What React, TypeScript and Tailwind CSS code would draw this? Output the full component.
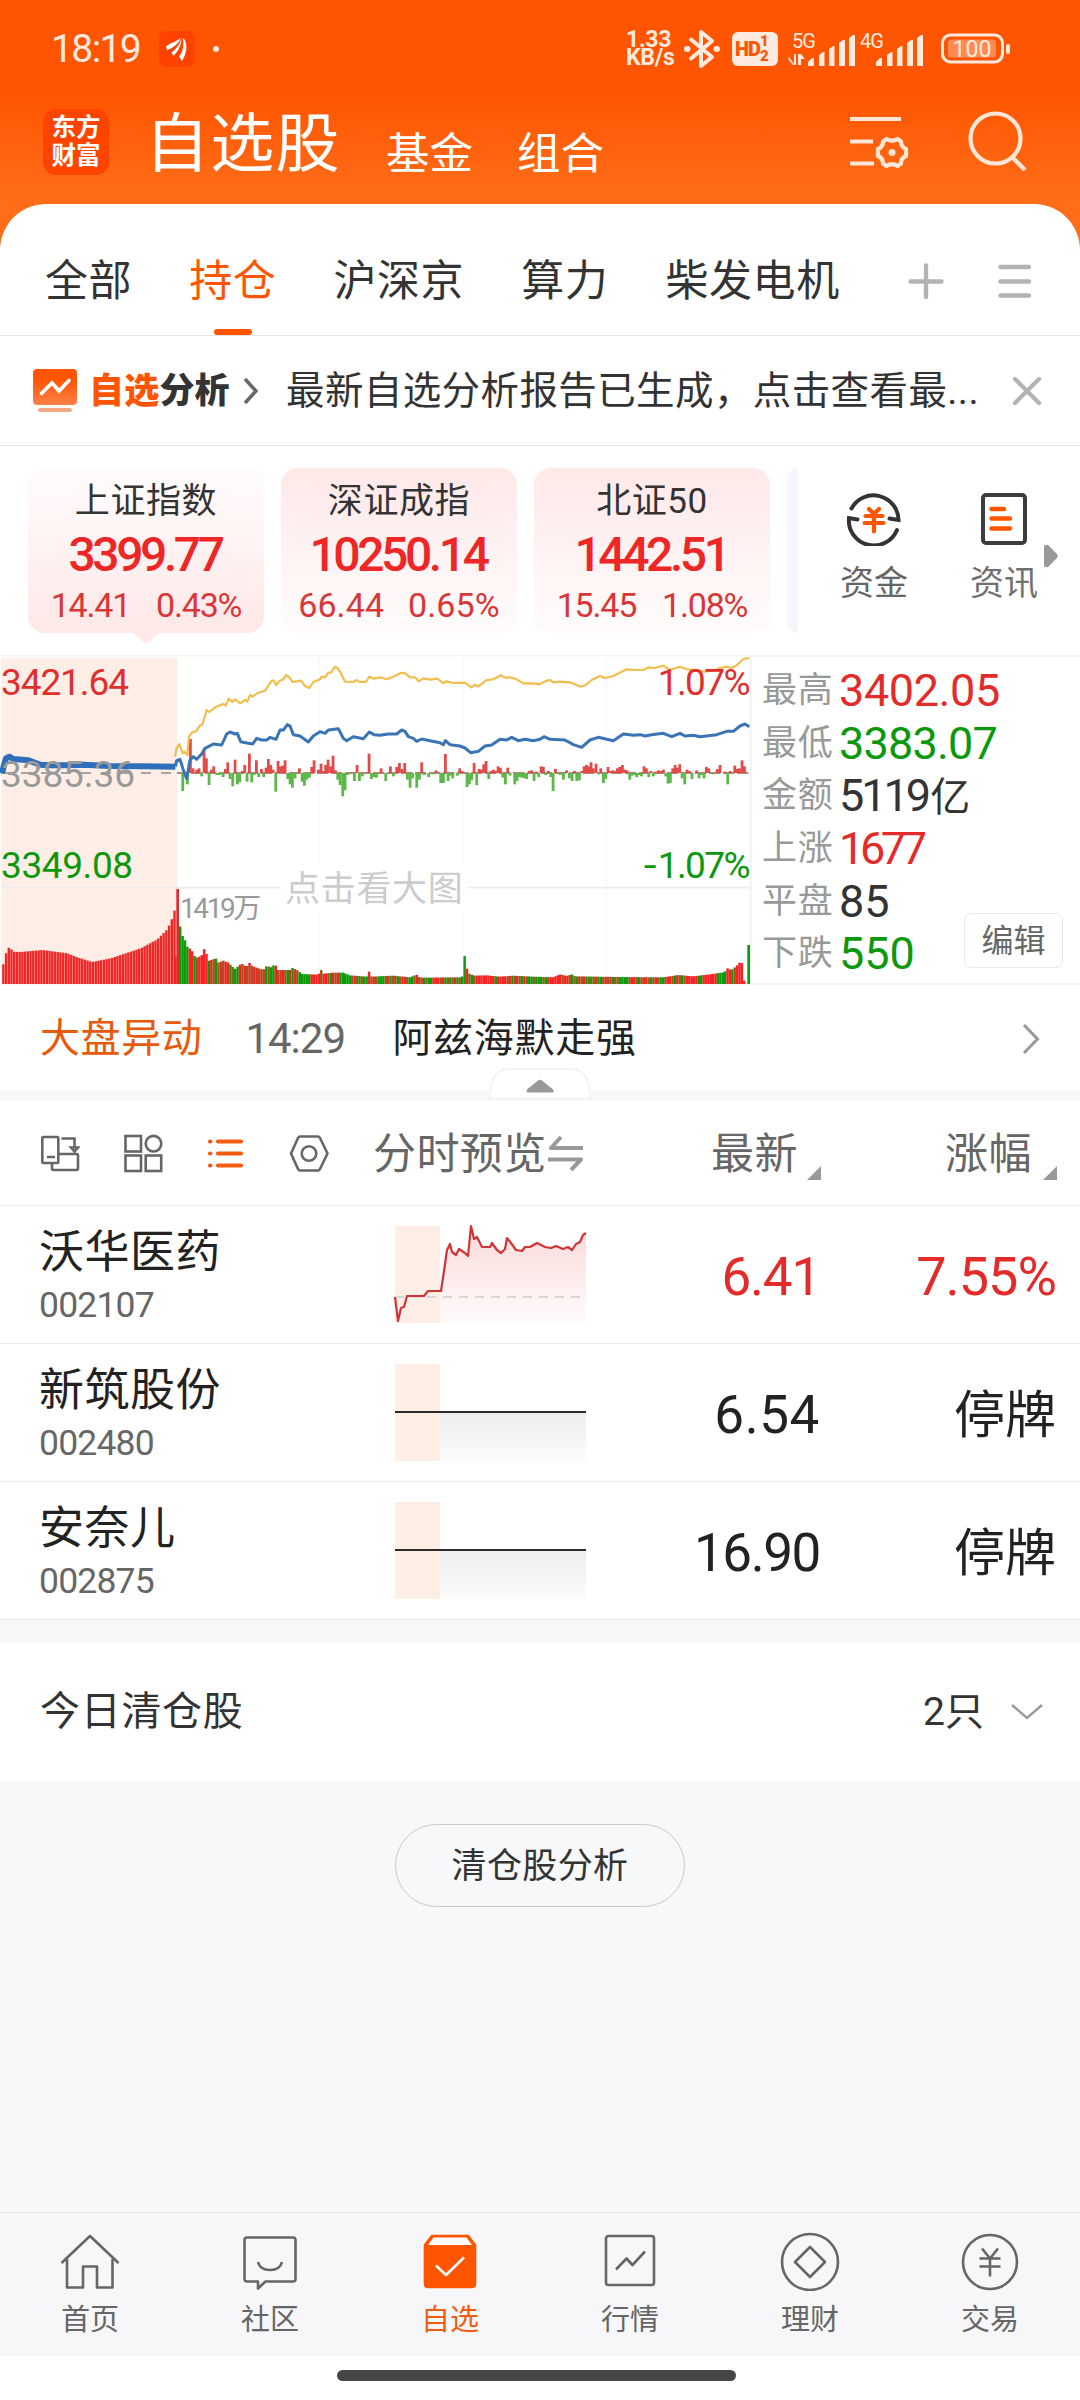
import type { ReactNode } from "react";

interface IndexCardData {
  name: string;
  value: string;
  change: string;
  percent: string;
  active?: boolean;
  wide?: boolean;
}

interface Stock {
  name: string;
  code: string;
  price: string;
  change: string;
  up: boolean;
  priceTracking: string;
}

const tabs = ["全部", "持仓", "沪深京", "算力", "柴发电机"];

const indexes: IndexCardData[] = [
  { name: "上证指数", value: "3399.77", change: "14.41", percent: "0.43%", active: true },
  { name: "深证成指", value: "10250.14", change: "66.44", percent: "0.65%", wide: true },
  { name: "北证50", value: "1442.51", change: "15.45", percent: "1.08%" },
];

const stats = [
  { label: "最高", value: "3402.05", color: "text-[#e52a2a]", tracking: "tracking-[-0.4px]" },
  { label: "最低", value: "3383.07", color: "text-[#0c980c]", tracking: "tracking-[-0.8px]" },
  { label: "金额", value: "5119亿", color: "text-[#333]", tracking: "tracking-[-3px]" },
  { label: "上涨", value: "1677", color: "text-[#e52a2a]", tracking: "tracking-[-4.4px]" },
  { label: "平盘", value: "85", color: "text-[#333]", tracking: "tracking-[0px]" },
  { label: "下跌", value: "550", color: "text-[#0c980c]", tracking: "tracking-[0px]" },
];

const stocks: Stock[] = [
  { name: "沃华医药", code: "002107", price: "6.41", change: "7.55%", up: true, priceTracking: "tracking-[-1.2px]" },
  { name: "新筑股份", code: "002480", price: "6.54", change: "停牌", up: false, priceTracking: "tracking-[0.6px]" },
  { name: "安奈儿", code: "002875", price: "16.90", change: "停牌", up: false, priceTracking: "tracking-[-1.4px]" },
];

// ==========================================
// 分时图データ（1px = 3ユニット）
// ==========================================
const yellowLine =
  "525,350 530,325 538,312 548,340 553,335 562,345 567,290 575,278 590,272 598,258 608,252 620,210 628,216 645,202 670,192 677,197 686,176 697,186 706,178 720,190 735,180 742,184 750,165 757,170 775,158 795,152 815,122 822,122 828,135 840,122 850,118 858,105 868,112 878,126 903,122 915,138 928,144 940,126 950,122 960,118 965,110 975,112 985,98 993,98 1005,80 1012,84 1022,98 1035,125 1060,126 1070,120 1078,126 1098,126 1108,110 1122,116 1140,112 1160,118 1180,110 1200,100 1207,98 1215,100 1230,112 1245,112 1256,124 1270,115 1290,119 1312,116 1330,130 1338,124 1360,129 1395,128 1414,142 1425,134 1435,139 1460,120 1480,118 1503,106 1515,113 1530,112 1550,118 1570,130 1600,130 1618,133 1640,122 1650,120 1660,127 1680,125 1710,127 1742,140 1755,136 1775,120 1800,108 1815,114 1840,108 1880,88 1910,90 1930,90 1945,82 1965,84 1990,77 2010,90 2040,80 2060,88 2090,90 2110,95 2140,92 2160,84 2180,80 2195,84 2210,76 2230,57 2247,54";

const blueAuction = "6,400 12,375 18,355 28,350 40,357 85,361 120,374 150,376 200,376 250,374 330,378 430,379 526,380";

const blueLine =
  "526,380 530,362 540,358 550,390 560,416 570,360 580,350 590,358 605,342 615,325 640,312 665,315 680,282 690,276 705,282 712,280 722,305 745,310 758,312 770,295 785,300 800,300 810,292 828,298 840,270 850,270 862,254 870,258 880,284 900,288 925,306 940,288 960,275 975,280 985,270 1015,266 1030,295 1040,302 1060,290 1090,296 1108,276 1122,284 1140,286 1165,282 1190,282 1205,270 1215,274 1225,290 1240,295 1250,304 1265,297 1290,302 1320,308 1330,314 1336,302 1350,314 1380,318 1395,324 1412,338 1435,334 1455,318 1475,315 1500,298 1520,300 1535,292 1555,302 1575,298 1600,302 1620,298 1632,290 1650,298 1695,300 1720,314 1745,322 1770,300 1795,292 1840,302 1870,282 1900,286 1920,284 1935,288 1955,284 1990,280 2015,290 2040,280 2055,288 2080,286 2100,290 2150,284 2180,274 2200,274 2220,258 2235,252 2248,260";

// [x, 高さ] 正=赤, 負=緑
const ticks: [number, number][] = [
  [548, -54], [562, -34], [571, 102], [579, 14], [590, 10], [597, 14], [605, -10], [612, 70], [619, 44], [627, -36], [634, 10], [641, 20],
  [650, -6], [658, -6], [669, -12], [676, 12], [683, 32], [690, -18], [698, -40], [705, 40], [712, -34], [719, -28], [727, 6], [734, 24],
  [741, -26], [748, 58], [755, -28], [762, -6], [769, 38], [776, -12], [784, 12], [791, -12], [798, 16], [805, 42], [812, 24], [819, 10],
  [827, -56], [834, 36], [841, 20], [848, 22], [855, 38], [863, -18], [870, -34], [877, -44], [885, -16], [898, 14], [906, -26], [913, -38],
  [920, -20], [928, -14], [935, 18], [942, 38], [955, 10], [963, 28], [970, 6], [977, 24], [984, 40], [992, 20], [999, 52], [1006, 8],
  [1013, -20], [1020, -36], [1028, -70], [1035, -52], [1042, -6], [1063, -24], [1071, 24], [1078, -24], [1087, -10], [1107, 58], [1114, -18],
  [1122, -12], [1129, -14], [1143, 14], [1157, -24], [1171, 20], [1180, -10], [1190, 18], [1198, 30], [1206, 12], [1214, 30], [1222, -20],
  [1230, -44], [1238, -16], [1250, -44], [1258, -20], [1265, 32], [1273, -6], [1286, -12], [1300, -4], [1308, 8], [1322, -30], [1330, -30],
  [1336, 57], [1344, -24], [1351, -8], [1358, -16], [1372, -8], [1379, 14], [1386, 6], [1401, -42], [1408, -34], [1415, -22], [1422, 30],
  [1430, -36], [1437, 12], [1444, 10], [1451, 26], [1458, 36], [1466, -18], [1473, 6], [1480, 10], [1487, 6], [1494, 20], [1501, 16],
  [1508, -14], [1516, -34], [1523, 16], [1530, -8], [1544, -34], [1551, -24], [1558, -12], [1565, -14], [1573, -16], [1580, -18], [1588, 6],
  [1595, 8], [1602, -24], [1609, 4], [1616, -12], [1623, 20], [1630, 18], [1637, -6], [1645, 6], [1652, -12], [1659, -54], [1666, 12],
  [1680, -6], [1690, -20], [1700, 8], [1708, -16], [1716, -24], [1723, 6], [1730, -24], [1738, -22], [1745, 6], [1752, 20], [1759, 24],
  [1766, 20], [1773, 32], [1780, 14], [1788, 28], [1795, -4], [1802, 14], [1810, -30], [1817, -18], [1824, 18], [1831, 6], [1838, 8],
  [1845, 6], [1852, 14], [1859, 18], [1867, 24], [1874, 10], [1881, 8], [1889, -20], [1896, -8], [1903, -6], [1910, -12], [1917, -6],
  [1924, -10], [1932, 20], [1939, 14], [1946, -12], [1953, 6], [1960, -10], [1968, 4], [1975, 8], [1982, 6], [1990, 10], [1997, -10],
  [2004, -32], [2011, -30], [2018, 14], [2025, 24], [2032, 16], [2039, 26], [2046, -16], [2054, -34], [2061, 10], [2068, 6], [2076, -18],
  [2090, 8], [2097, -16], [2104, -6], [2112, -16], [2119, 18], [2126, 14], [2140, -4], [2152, 12], [2160, 24], [2175, 4], [2183, -34],
  [2190, 6], [2204, 22], [2211, 12], [2218, 14], [2226, 38], [2233, 20],
];

// 出来高の輪郭 [x, 上端y]
const volumeShape: [number, number][] = [
  [538, 846], [547, 886], [555, 900], [562, 920], [575, 930], [584, 948], [592, 953], [605, 947], [612, 926], [620, 942], [627, 962],
  [648, 955], [656, 968], [670, 962], [685, 968], [705, 987], [725, 970], [740, 981], [748, 968], [757, 978], [790, 990], [800, 978],
  [815, 982], [825, 972], [835, 990], [870, 990], [878, 984], [895, 992], [905, 1002], [955, 1004], [964, 990], [971, 1001], [1000, 998],
  [1030, 998], [1050, 1006], [1100, 1010], [1107, 994], [1115, 1010], [1180, 1007], [1230, 1012], [1250, 1004], [1260, 1013], [1380, 1012],
  [1387, 1010], [1394, 947], [1401, 985], [1409, 1002], [1425, 1007], [1460, 1006], [1500, 1010], [1540, 1007], [1600, 1010], [1660, 1012],
  [1680, 1003], [1700, 1008], [1716, 1003], [1725, 1009], [1850, 1011], [1990, 1012], [2035, 1005], [2080, 1009], [2130, 1003], [2165, 998],
  [2175, 996], [2180, 984], [2195, 990], [2210, 978], [2225, 961], [2232, 1022],
];

const auctionShape: [number, number][] = [
  [8, 973], [19, 928], [28, 920], [36, 935], [60, 936], [125, 930], [200, 940], [230, 952], [275, 966], [330, 955], [420, 925],
  [470, 898], [500, 868], [512, 842], [521, 812],
];

function topAt(shape: [number, number][], x: number) {
  for (let i = 1; i < shape.length; i++) {
    const [x0, y0] = shape[i - 1];
    const [x1, y1] = shape[i];
    if (x <= x1) return y0 + ((y1 - y0) * Math.max(0, x - x0)) / (x1 - x0);
  }
  return shape[shape.length - 1][1];
}

const auctionBars = Array.from({ length: 64 }, (_, i) => 8 + i * 8.15);
const volumeBars = Array.from({ length: 237 }, (_, i) => 541 + i * 7.17);

// 1文字 = 1本, r=赤 g=緑 m=混在
const volumeColors =
  "ggggrrgmrrrrgrmgmrmrrgmggrmrmrmrrmrmgmggrmrrmgrgrmgggggrrrrmrrmgrmrgggggmrmgmggrmrmgggmrgmrgmrrmggmrmrgmggrrrmrgmgmrgmggrmgmrrrrrrrrgrrrrmrgmrmgrmggmgggmgrrrrrrmrrmgmgrmrgmgmrggmrmrgmmggggmrrmgmrrmgmrmggmrrmgrmgmrrrrrggrrrrrr";

function volumeColor(i: number) {
  const c = volumeColors[i % volumeColors.length];
  return c === "r" ? "#f52323" : c === "g" ? "#0a9c0a" : "#9a5a1c";
}

function IntradayChart() {
  return (
    <div className="relative h-[330px] w-[752px] shrink-0">
      <svg className="block h-[330px] w-[752px]" viewBox="0 45 2256 990">
        <rect x="3" y="54" width="528" height="978" fill="#ffeee6" />
        <path d="M0 47H2256" stroke="#f3f3f5" strokeWidth="5" />
        <path d="M531 54V1032M959 54V672M959 820V1032M1389 54V672M1389 820V1032M1819 54V1032" stroke="#e4e4e8" strokeWidth="2.5" strokeDasharray="3 5" />
        <path d="M3 743H840M1404 743H2252" stroke="#ececee" strokeWidth="5" />
        <path d="M2252 47V1032" stroke="#f0f0f3" strokeWidth="5" />
        <path d="M0 1032H2256" stroke="#f3f3f5" strokeWidth="4" />
        <path d="M3 399H531" stroke="#8c8c8c" strokeWidth="5" strokeDasharray="30 30" />
        <path d="M531 399H2248" stroke="#9c5c4c" strokeWidth="4" strokeDasharray="34 8" />
        {ticks.map(([x, h]) => (
          <rect key={x} x={x - 4} y={h > 0 ? 399 - h : 399} width="8.4" height={Math.abs(h)} fill={h > 0 ? "#e34a4a" : "#5cb849"} />
        ))}
        <polyline points={yellowLine} fill="none" stroke="#f2bd4b" strokeWidth="6.5" strokeLinejoin="round" />
        <polyline points={blueAuction} fill="none" stroke="#2e6fbb" strokeWidth="18" strokeLinejoin="round" />
        <polyline points={blueLine} fill="none" stroke="#3a74b5" strokeWidth="9" strokeLinejoin="round" />
        {auctionBars.map((x) => (
          <rect key={x} x={x - 1.5} y={topAt(auctionShape, x)} width="7.2" height={1032 - topAt(auctionShape, x)} fill="#ee2626" />
        ))}
        <rect x="524" y="950" width="6" height="82" fill="#f52323" />
        {volumeBars.map((x, i) => (
          <rect key={x} x={x - 4} y={topAt(volumeShape, x)} width="7.4" height={1032 - topAt(volumeShape, x)} fill={volumeColor(i)} />
        ))}
        <rect x="529" y="747" width="8" height="285" fill="#dd2c2c" />
        <rect x="2242" y="915" width="8" height="117" fill="#0a9c0a" />
      </svg>
      {/* 軸ラベル */}
      <span className="absolute left-px top-[9px] text-[37px] leading-none tracking-[-1.1px] text-[#e02f2f]">3421.64</span>
      <span className="absolute left-px top-[101px] text-[37px] leading-none tracking-[-0.1px] text-[#999]">3385.36</span>
      <span className="absolute left-px top-[192px] text-[37px] leading-none tracking-[-0.4px] text-[#0c980c]">3349.08</span>
      <span className="absolute right-[3px] top-[9px] text-[37px] leading-none tracking-[-1.6px] text-[#e02f2f]">1.07%</span>
      <span className="absolute right-[3px] top-[192px] flex text-[37px] leading-none tracking-[-1.6px] text-[#0c980c]">
        <span className="mr-[3px] origin-right scale-x-125">-</span>1.07%
      </span>
      <span className="absolute left-[180px] top-[240px] text-[28px] leading-none tracking-[-2.4px] text-[#999]">1419万</span>
      <span className="absolute left-[285px] top-[217px] text-[35px] leading-none tracking-[0.7px] text-[#ccc]">点击看大图</span>
    </div>
  );
}

function StatusBar() {
  return (
    <div className="flex h-[98px] items-center pl-[51px] text-[#ffeadf]">
      <span className="w-[108px] text-[39px] leading-none tracking-[-1.6px]">18:19</span>
      <div className="flex h-9 w-9 items-center justify-center rounded-[7px] bg-[#ff4200]">
        <svg className="h-6 w-6" viewBox="0 0 24 24" fill="#fff">
          <path d="M1 9.500C5 6 11 5 15.500 1C14.500 6 8 11.500 2 13Z" />
          <path d="M16.500 .5C16.500 8 13.500 14 8.500 19L6.500 15.500C11 12 15 7.500 16.500 .5Z" />
          <path d="M18 1C22.500 4 23 15 17 24L14 19.500C18.500 14 19 8 17.800 1Z" />
        </svg>
      </div>
      <span className="ml-[18px] h-[6px] w-[6px] rounded-full bg-[#ffeadf]" />
      <div className="ml-[407px] flex w-[58px] flex-col text-[23px] font-bold leading-[18px] tracking-[-0.3px]">
        <span>1.33</span>
        <span>KB/s</span>
      </div>
      <svg className="h-[40px] w-[36px]" viewBox="0 0 36 40" fill="none" stroke="#ffeadf" strokeWidth="4" strokeLinejoin="round" strokeLinecap="round">
        <path d="M7 10.500L28 28L17 37V3L28 12L7 29.500" />
        <path d="M3 20h.5M32.500 20h.5" strokeWidth="6" />
      </svg>
      <div className="ml-3 flex h-[34px] w-[46px] items-center rounded-[6px] bg-[#ffeadf] pl-[3px] text-[#ff5500]">
        <span className="text-[20px] font-black leading-none tracking-[-1px]">HD</span>
        <span className="flex flex-col text-[15px] font-black leading-[15px]">
          <span>1</span>
          <span>2</span>
        </span>
      </div>
      <Signal label="5G" data />
      <Signal label="4G" />
      <svg className="ml-3 h-[32px] w-[72px]" viewBox="0 0 72 32">
        <rect x="2.500" y="2" width="60" height="27" rx="8" fill="none" stroke="#ffeadf" strokeWidth="3" />
        <rect x="8" y="6.500" width="48" height="18" rx="3" fill="#ff8a52" />
        <rect x="66" y="11" width="4" height="10" rx="2" fill="#ffeadf" />
        <text x="32" y="23.500" textAnchor="middle" fontSize="23" fill="#ffeadf">100</text>
      </svg>
    </div>
  );
}

function Signal({ label, data }: { label: string; data?: boolean }) {
  return (
    <svg
      className={data ? "ml-[10px] h-[40px] w-[72px] overflow-visible" : "h-[40px] w-[68px] overflow-visible"}
      viewBox={data ? "0 -2 72 40" : "4 -2 68 40"}
      fill="#ffeadf"
    >
      <text x="4" y="17" fontSize="20" letterSpacing="-1">{label}</text>
      {data && <path d="M1 26L6 33V23H8V34H5L0 28ZM10 23H13L17 28H13V34H10Z" />}
      <path d="M20 35V31L24 27H26V35ZM31 35V24L35 21H36.500V35ZM41 35V18L45 15H46.500V35ZM51 35V12L55 9H57V35ZM61 35V7L65 4H67V35Z" />
    </svg>
  );
}

function TitleBar() {
  return (
    <div className="flex h-[106px] items-start pl-[43px]">
      <div className="mt-[11px] flex h-[66px] w-[66px] flex-col items-center justify-center rounded-[13px] bg-[#ff4400] text-[24.500px] font-bold leading-[28px] text-white">
        <span>东方</span>
        <span>财富</span>
      </div>
      <h1 className="ml-[36px] mt-[15px] w-[194px] whitespace-nowrap text-[64px] leading-none tracking-[1.2px] text-white">自选股</h1>
      <span className="ml-[47px] mt-[35px] w-[87px] text-[43.500px] leading-none text-white">基金</span>
      <span className="ml-[44px] mt-[35px] w-[87px] text-[43.500px] leading-none text-white">组合</span>
      <svg className="ml-[246px] mt-[14px] h-[60px] w-[62px]" viewBox="0 0 62 60" fill="none" stroke="#ffe6d6" strokeWidth="4.200">
        <path d="M0 7H51M0 29.500H23M0 51.500H24" />
        <path
          d="M36.500 27Q42 30.500 47.500 27L51 29.500Q51 35 56 37V44Q51 46 51 51.500L47.500 54Q42 50.500 36.500 54L33 51.500Q33 46 28 44V37Q33 35 33 29.500Z"
          strokeLinejoin="round"
        />
        <circle cx="42" cy="40.500" r="3.500" fill="#ffe6d6" stroke="none" />
      </svg>
      <svg className="ml-[54px] mt-[11px] h-[62px] w-[62px]" viewBox="0 0 62 62" fill="none" stroke="#ffe6d6" strokeWidth="4.200">
        <circle cx="29.500" cy="29.500" r="25" />
        <path d="M46 48L59 61" />
      </svg>
    </div>
  );
}

function TabRow() {
  return (
    <div className="flex h-[132px] items-start gap-[57px] border-b border-[#e4e4e4] pl-[45px] pt-[56px]">
      {tabs.map((tab) => (
        <div key={tab} className={`flex flex-col items-center text-[43px] leading-none tracking-[0.6px] ${tab === "持仓" ? "text-[#ff5500]" : "text-[#333]"}`}>
          {tab}
          {tab === "持仓" && <span className="mt-[26px] h-[6px] w-[38px] rounded-full bg-[#ff5500]" />}
        </div>
      ))}
      <svg className="ml-[11px] mt-[3px] h-[36px] w-[36px]" viewBox="0 0 36 36" stroke="#b3b3b3" strokeWidth="4.400" strokeLinecap="round">
        <path d="M2.500 18.500H33.500M18 2.500V34" />
      </svg>
      <svg className="-ml-[4px] mt-[3px] h-[36px] w-[36px]" viewBox="0 0 36 36" stroke="#b3b3b3" strokeWidth="4.400" strokeLinecap="round">
        <path d="M3.500 4H32M3.500 18.500H32M3.500 32.500H32" />
      </svg>
    </div>
  );
}

function NoticeRow() {
  return (
    <div className="flex h-[110px] items-center border-b border-[#e4e4e4] pl-[33px]">
      <svg className="h-[44px] w-[44px]" viewBox="0 0 44 44">
        <defs>
          <linearGradient id="notice" x1="0" y1="0" x2="0" y2="1">
            <stop offset="0.300" stopColor="#ff5500" />
            <stop offset="1" stopColor="#ff8148" />
          </linearGradient>
        </defs>
        <rect width="44" height="36" rx="4" fill="url(#notice)" />
        <rect x="5" y="39" width="34" height="4" rx="2" fill="#f6a783" />
        <path d="M8.500 24.500L19 14L26 22L36 11.500" fill="none" stroke="#fff" strokeWidth="3.600" strokeLinecap="round" />
      </svg>
      <span className="ml-[12px] mt-px w-[142px] whitespace-nowrap text-[35px] font-black leading-none tracking-[0.2px] text-[#333]">
        <span className="text-[#ff5500]">自选</span>分析
      </span>
      <svg className="ml-[12px] h-[28px] w-[16px]" viewBox="0 0 16 28" fill="none" stroke="#666" strokeWidth="3.500">
        <path d="M2 2L13 14L2 26" />
      </svg>
      <span className="ml-[27px] mt-px w-[712px] whitespace-nowrap text-[38.500px] leading-[50px] tracking-[0.4px] text-[#333]">最新自选分析报告已生成，点击查看最...</span>
      <svg className="ml-[14px] h-[30px] w-[30px]" viewBox="0 0 30 30" stroke="#b3b3b3" strokeWidth="4.200" strokeLinecap="round">
        <path d="M3 3L27 27M27 3L3 27" />
      </svg>
    </div>
  );
}

function IndexCard({ item }: { item: IndexCardData }) {
  return (
    <div
      className={`relative flex h-[165px] w-[236px] shrink-0 flex-col items-center rounded-[17px] pt-[16px] ${
        item.active ? "bg-linear-to-b from-[#fffcfc] to-[#ffe8e8]" : "bg-linear-to-b from-[#ffe8e8] to-[#fffcfc]"
      }`}
    >
      <span className="text-[35px] leading-none tracking-[0.6px] text-[#333]">{item.name}</span>
      <span className="mt-[12px] pr-[2px] text-[48px] font-medium leading-none tracking-[-3.4px] text-[#ee2626]">{item.value}</span>
      <div className={`mt-[9px] flex whitespace-nowrap text-[34px] leading-none text-[#d93636] ${item.wide ? "gap-[24px] tracking-[0.1px]" : "gap-[26px] tracking-[-1.2px]"}`}>
        <span>{item.change}</span>
        <span>{item.percent}</span>
      </div>
      {item.active && (
        <svg className="absolute left-[104px] top-[164px] h-[12px] w-[28px]" viewBox="0 0 28 12">
          <path d="M0 0H28L17 9.500Q14 12 11 9.500Z" fill="#ffe8e8" />
        </svg>
      )}
    </div>
  );
}

function IndexRow() {
  return (
    <div className="flex h-[209px] items-start pl-[28px] pt-[22px]">
      <div className="flex gap-[17px]">
        {indexes.map((item) => (
          <IndexCard key={item.name} item={item} />
        ))}
        <div className="h-[165px] w-[11px] rounded-l-[11px] bg-[#f6f7fa]" />
      </div>
      <div className="ml-[43px] flex w-[66px] flex-col items-center pt-[22px]">
        <svg className="h-[56px] w-[56px]" viewBox="0 0 56 56" fill="none" strokeWidth="4" strokeLinecap="round">
          <path d="M5.500 18.500A25 25 0 0 1 52.500 30L43.500 28.500M51 40A25 25 0 0 1 3 28L11.500 29.500" stroke="#333" />
          <path d="M23 19L28 24L33 19M19.500 26H36.500M18.500 33H37.500M28 24V41.500" stroke="#ff5500" strokeWidth="4.200" />
        </svg>
        <span className="mt-[20px] whitespace-nowrap text-[34px] leading-none text-[#666]">资金</span>
      </div>
      <div className="ml-[63px] flex w-[68px] flex-col items-center pt-[22px]">
        <svg className="h-[56px] w-[48px]" viewBox="0 0 48 56" fill="none" strokeWidth="4" strokeLinecap="round">
          <rect x="3" y="5" width="42" height="48" rx="3" stroke="#3d3d3d" />
          <path d="M11.500 19H24M11.500 28.500H30M11.500 38.500H30" stroke="#ff5500" strokeWidth="4.400" />
        </svg>
        <span className="mt-[20px] whitespace-nowrap text-[34px] leading-none text-[#707070]">资讯</span>
      </div>
      <svg className="ml-[6px] mt-[76px] h-[24px] w-[14px]" viewBox="0 0 14 24" fill="#999">
        <path d="M0 3Q0 0 4 1L13 10Q14.500 12 13 14L4 23Q0 24 0 21Z" />
      </svg>
    </div>
  );
}

function MarketPanel() {
  return (
    <div className="flex h-[330px]">
      <IntradayChart />
      <div className="relative flex-1 border-y-2 border-[#f4f4f6] pl-[10px] pt-[7px]">
        {stats.map((s) => (
          <div key={s.label} className="flex h-[52.700px] items-center">
            <span className="w-[77px] text-[35px] leading-none tracking-[0.8px] text-[#999]">{s.label}</span>
            <span className={`text-[45px] leading-none ${s.tracking} ${s.color}`}>
              {s.value.replace("亿", "")}
              {s.value.endsWith("亿") && <span className="ml-[2px] text-[40px]">亿</span>}
            </span>
          </div>
        ))}
        <button className="absolute right-[17px] top-[256px] h-[55px] w-[99px] rounded-[7px] border border-[#e8e8e8] bg-white text-[32px] leading-none text-[#666]">编辑</button>
      </div>
    </div>
  );
}

function AlertRow() {
  return (
    <div className="relative flex h-[105px] items-center pl-[40px] pt-[2px] text-[40px] leading-none">
      <span className="tracking-[0.6px] text-[#e8590c]">大盘异动</span>
      <span className="ml-[43px] w-[147px] text-[42px] tracking-[-1px] text-[#666]">14:29</span>
      <span className="tracking-[0.7px] text-[#222]">阿兹海默走强</span>
      <svg className="ml-auto mr-[40px] h-[32px] w-[18px]" viewBox="0 0 18 32" fill="none" stroke="#999" strokeWidth="3">
        <path d="M2 2L15.500 16L2 30" />
      </svg>
      {/* 折りたたみつまみ */}
      <svg className="absolute left-[488px] top-[83px] h-[32px] w-[104px]" viewBox="0 0 104 32">
        <path d="M1 30.500L4 14Q8 1 20 1H84Q96 1 100 14L103 30.500Z" fill="#fff" stroke="#f0f1f3" strokeWidth="1.500" />
        <path d="M39 24Q38 23 39 21.500L50 12.500Q52 11 54 12.500L65 21.500Q66.500 23 65 24.500H39Z" fill="#999" />
      </svg>
    </div>
  );
}

function SortMark() {
  return (
    <svg className="h-[14px] w-[14px]" viewBox="0 0 14 14" fill="#999">
      <path d="M14 0V14H0Z" />
    </svg>
  );
}

function ListHeader() {
  return (
    <div className="flex h-[105px] items-center border-b border-[#ebebeb] pl-[40px] text-[43px] leading-none text-[#666]">
      <svg className="h-[40px] w-[40px]" viewBox="0 0 40 40" fill="none" stroke="#666" strokeWidth="2.600">
        <rect x="2.300" y="4" width="16" height="26" rx="1" />
        <path d="M7 24H15M21.500 5.500H34.500V15M31 14.500L34.500 18.500L38 14.500Z M19 21H36.500Q38 21 38 22.500V35Q38 37 36.500 37H13.500Q12 37 12 35V30.500" />
      </svg>
      <svg className="ml-[43px] h-[40px] w-[40px]" viewBox="0 0 40 40" fill="none" stroke="#666" strokeWidth="2.600">
        <rect x="2.500" y="3" width="15.500" height="15.500" />
        <circle cx="30.500" cy="10.700" r="7.800" />
        <rect x="2.500" y="22.500" width="15.500" height="15.500" />
        <rect x="22.700" y="22.500" width="15.500" height="15.500" />
      </svg>
      <svg className="ml-[43px] h-[40px] w-[40px]" viewBox="0 0 40 40" fill="none" stroke="#f25c10" strokeWidth="4.200" strokeLinecap="round">
        <path d="M4 8.500h.4M4 20.500h.4M4 32.500h.4M12 8.500H35M12 20.500H35M12 32.500H35" />
      </svg>
      <svg className="ml-[43px] h-[40px] w-[40px]" viewBox="0 0 40 40" fill="none" stroke="#666" strokeWidth="2.600" strokeLinejoin="round">
        <path d="M11 3.500H29Q30 3.500 31 5L38.500 20.500L31 36Q30 37.500 29 37.500H11Q10 37.500 9 36L2 20.500L9 5Q10 3.500 11 3.500Z" />
        <circle cx="20" cy="20.500" r="7.300" />
      </svg>
      <span className="ml-[44px] mt-[2px] w-[173px] whitespace-nowrap tracking-[0.4px]">分时预览</span>
      <svg className="h-[36px] w-[40px]" viewBox="0 0 40 36" fill="none" stroke="#999" strokeWidth="4" strokeLinejoin="round">
        <path d="M37 13H5L15 2M2 24.500H35L25 35" />
      </svg>
      <div className="ml-[125px] mt-[2px] flex w-[110px] items-end justify-between tracking-[0.6px]">
        <span>最新</span>
        <span className="-mb-[4px]"><SortMark /></span>
      </div>
      <div className="ml-[124px] mt-[2px] flex w-[112px] items-end justify-between tracking-[0.6px]">
        <span>涨幅</span>
        <span className="-mb-[4px]"><SortMark /></span>
      </div>
    </div>
  );
}

const sparkPoints =
  "0,71 3,95 6,82 9,81 12,70 29,70 33,65 46,65 49,45 52,24 55,18 57,26 61,29 64,23 70,27 73,30 76,0 79,13 82,11 87,21 95,21 97,17 102,24 106,27 110,23 112,12 116,17 121,24 127,25 130,21 135,21 142,17 150,21 156,22 161,20 168,23 173,21 177,24 181,18 185,16 188,9 191,7";

function Sparkline({ up }: { up: boolean }) {
  return (
    <svg className="h-[98px] w-[192px] overflow-visible" viewBox="0 0 192 98">
      <defs>
        <linearGradient id="spark-up" x1="0" y1="0" x2="0" y2="1">
          <stop offset="0" stopColor="#fbd9d9" />
          <stop offset="1" stopColor="#fffcfc" />
        </linearGradient>
        <linearGradient id="spark-flat" x1="0" y1="0" x2="0" y2="1">
          <stop offset="0" stopColor="#ededed" />
          <stop offset="1" stopColor="#fcfcfc" />
        </linearGradient>
      </defs>
      <rect width="45" height="97" fill="#ffeee6" />
      {up ? (
        <>
          <path d={`M45 97V65L${sparkPoints.slice(sparkPoints.indexOf("46,65"))} 191,97Z`} fill="url(#spark-up)" />
          <path d="M0 71H191" stroke="#d8d8dc" strokeWidth="2" strokeDasharray="9 7" />
          <polyline points={sparkPoints} fill="none" stroke="#d13434" strokeWidth="2.200" strokeLinejoin="round" />
        </>
      ) : (
        <>
          <rect x="45" y="48" width="146" height="49" fill="url(#spark-flat)" />
          <path d="M0 48H191" stroke="#2b2b2b" strokeWidth="2" />
        </>
      )}
    </svg>
  );
}

function StockRow({ stock }: { stock: Stock }) {
  const color = stock.up ? "text-[#e52a2a]" : "text-[#222]";
  return (
    <div className="flex h-[138px] items-center border-b border-[#ebebeb] pl-[39px] pr-[24px] pt-px">
      <div className="flex w-[356px] flex-col pt-[4px]">
        <span className="text-[45px] leading-none tracking-[0.5px] text-[#222]">{stock.name}</span>
        <span className="mt-[13px] text-[35.500px] leading-none tracking-[-0.8px] text-[#666]">{stock.code}</span>
      </div>
      <Sparkline up={stock.up} />
      <span className={`ml-auto pt-[4px] text-right text-[53px] leading-none ${stock.priceTracking} ${color}`}>{stock.price}</span>
      <span className={`w-[236px] whitespace-nowrap pt-[4px] text-right leading-none ${color} ${stock.up ? "text-[54px] tracking-[-1px]" : "text-[51px]"}`}>{stock.change}</span>
    </div>
  );
}

function NavItem({ label, active, children }: { label: string; active?: boolean; children: ReactNode }) {
  return (
    <div className="flex w-[180px] flex-col items-center pt-[18px]">
      <svg className="h-[60px] w-[60px]" viewBox="0 0 60 60" fill="none" stroke="#666" strokeWidth="2.600" strokeLinejoin="round">
        {children}
      </svg>
      <span className={`mt-[15px] text-[29px] leading-none ${active ? "text-[#f25c10]" : "text-[#666]"}`}>{label}</span>
    </div>
  );
}

function BottomNav() {
  return (
    <nav className="flex h-[144px] border-t border-[#e2e2e4] bg-[#f7f7fa]">
      <NavItem label="首页">
        <path d="M1.500 32L30 5L58.500 32M7 28V56.500H23V35.500H37V56.500H52.500V28" />
      </NavItem>
      <NavItem label="社区">
        <path d="M7 6.500H53Q55.500 6.500 55.500 9V48Q55.500 50.500 53 50.500H25.500L18 57.500V50.500H7Q4.500 50.500 4.500 48V9Q4.500 6.500 7 6.500Z" />
        <path d="M18 31Q20 39 30 39Q40 39 42 31" />
      </NavItem>
      <NavItem label="自选" active>
        <path d="M12 5H48L55 14V53Q55 56 52 56H8Q5 56 5 53V14Z" fill="#ff5500" stroke="#ff5500" />
        <path d="M13.500 6.500H46.500L52 14H8Z" fill="#fff" stroke="none" />
        <path d="M16 34.500L26 44L44 26.500" stroke="#fff" />
      </NavItem>
      <NavItem label="行情">
        <rect x="6" y="5" width="48" height="49" rx="2.500" />
        <path d="M16 38.500L26.500 27.500L32.500 34L45 20.500" />
      </NavItem>
      <NavItem label="理财">
        <circle cx="30" cy="31" r="28" />
        <path d="M30 16L45 31L30 46L15 31Z" />
      </NavItem>
      <NavItem label="交易">
        <circle cx="30" cy="31" r="27" />
        <path d="M22 17.500L30 27.500L38 17.500M19.500 27.500H40.500M19.500 35.500H40.500M30 27.500V45.500" />
      </NavItem>
    </nav>
  );
}

export default function App() {
  return (
    <div className="flex h-[2400px] w-[1080px] flex-col overflow-hidden bg-[#f7f8fa] font-['Roboto','Noto_Sans_CJK_SC',sans-serif]">
      <div className="bg-linear-to-b from-[#ff5500] from-[94px] to-[#ff6d18] to-[200px]">
        <header className="h-[204px]">
          <StatusBar />
          <TitleBar />
        </header>
        <div className="rounded-t-[46px] bg-white">
          <TabRow />
        </div>
      </div>
      <section className="bg-white">
        <NoticeRow />
        <IndexRow />
        <MarketPanel />
        <AlertRow />
      </section>
      <section className="mt-[11px] bg-white">
        <ListHeader />
        {stocks.map((s) => (
          <StockRow key={s.code} stock={s} />
        ))}
      </section>
      <div className="mt-[23px] flex h-[138px] items-center bg-white pl-[40px] pr-[36px] text-[40px] leading-none text-[#333]">
        <span className="tracking-[0.7px]">今日清仓股</span>
        <span className="ml-auto text-[39px]">2只</span>
        <svg className="ml-[26px] h-[18px] w-[34px]" viewBox="0 0 34 18" fill="none" stroke="#999" strokeWidth="2.400">
          <path d="M2 2L17 15L32 2" />
        </svg>
      </div>
      <button className="mx-auto mt-[43px] h-[83px] w-[290px] rounded-full border border-[#c9cacd] pt-px text-[35px] leading-none tracking-[0.4px] text-[#333]">清仓股分析</button>
      <div className="flex-1" />
      <BottomNav />
      <div className="flex h-[44px] bg-white pl-[337px] pt-[14px]">
        <div className="h-[11px] w-[399px] rounded-full bg-[#464646]" />
      </div>
    </div>
  );
}
